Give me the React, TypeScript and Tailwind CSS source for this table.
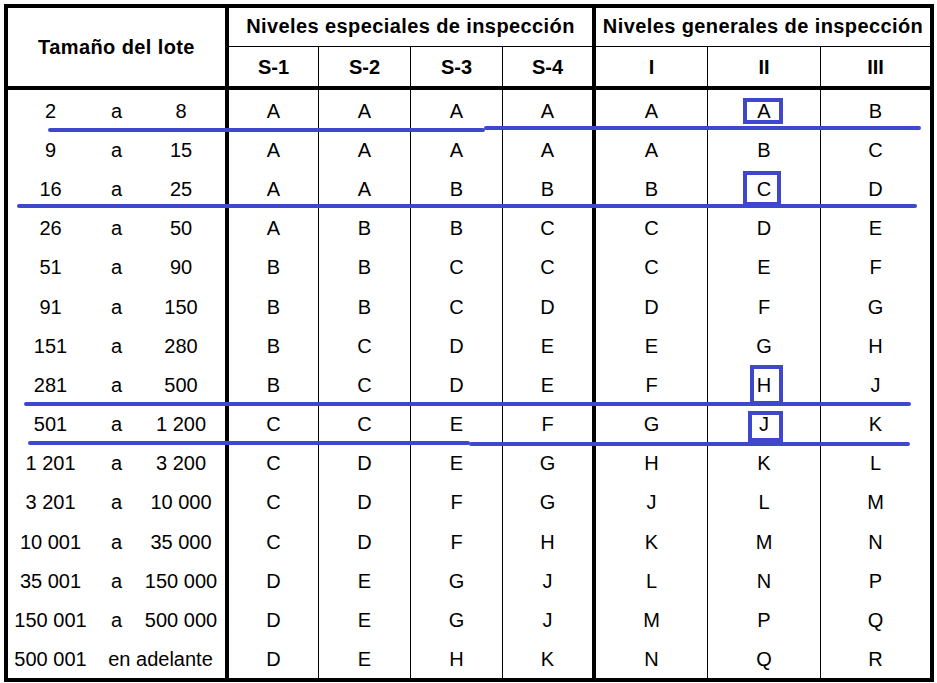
import React from "react";

const rows: string[][] = [
  ["2", "a", "8", "A", "A", "A", "A", "A", "A", "B"],
  ["9", "a", "15", "A", "A", "A", "A", "A", "B", "C"],
  ["16", "a", "25", "A", "A", "B", "B", "B", "C", "D"],
  ["26", "a", "50", "A", "B", "B", "C", "C", "D", "E"],
  ["51", "a", "90", "B", "B", "C", "C", "C", "E", "F"],
  ["91", "a", "150", "B", "B", "C", "D", "D", "F", "G"],
  ["151", "a", "280", "B", "C", "D", "E", "E", "G", "H"],
  ["281", "a", "500", "B", "C", "D", "E", "F", "H", "J"],
  ["501", "a", "1 200", "C", "C", "E", "F", "G", "J", "K"],
  ["1 201", "a", "3 200", "C", "D", "E", "G", "H", "K", "L"],
  ["3 201", "a", "10 000", "C", "D", "F", "G", "J", "L", "M"],
  ["10 001", "a", "35 000", "C", "D", "F", "H", "K", "M", "N"],
  ["35 001", "a", "150 000", "D", "E", "G", "J", "L", "N", "P"],
  ["150 001", "a", "500 000", "D", "E", "G", "J", "M", "P", "Q"],
  ["500 001", "en adelante", "", "D", "E", "H", "K", "N", "Q", "R"],
];

const cellW = [
  "w-[90px] border-r border-black",
  "w-[92px] border-r border-black",
  "w-[92px] border-r border-black",
  "w-[93px] border-r-4 border-black",
  "w-[112px] border-r border-black",
  "w-[113px] border-r border-black",
  "w-[109px]",
];

export default function App() {
  return (
    <div
      className="relative w-[937px] h-[683px] bg-white text-black overflow-hidden"
      style={{ fontFamily: '"Liberation Sans", Arial, sans-serif' }}
    >
      <div className="absolute left-0 top-0 pt-1 pl-1">
        <div className="w-[930px] border-4 border-black">
          {/* Header */}
          <div className="flex h-[82px] border-b-4 border-black font-bold text-[20px] tracking-[0.4px]">
            <div className="w-[221px] border-r-4 border-black flex items-center justify-center pb-[1px]">
              Tamaño del lote
            </div>
            <div className="w-[367px] border-r-4 border-black flex flex-col">
              <div className="h-[39px] border-b border-black flex items-center justify-center pb-[2px]">
                Niveles especiales de inspección
              </div>
              <div className="flex flex-1 tracking-normal">
                <div className="w-[90px] border-r border-black flex items-center justify-center">S-1</div>
                <div className="w-[92px] border-r border-black flex items-center justify-center">S-2</div>
                <div className="w-[92px] border-r border-black flex items-center justify-center">S-3</div>
                <div className="w-[89px] flex items-center justify-center">S-4</div>
              </div>
            </div>
            <div className="w-[334px] flex flex-col">
              <div className="h-[39px] border-b border-black flex items-center justify-center pb-[2px]">
                Niveles generales de inspección
              </div>
              <div className="flex flex-1 tracking-normal">
                <div className="w-[112px] border-r border-black flex items-center justify-center">I</div>
                <div className="w-[113px] border-r border-black flex items-center justify-center">II</div>
                <div className="w-[109px] flex items-center justify-center">III</div>
              </div>
            </div>
          </div>
          {/* Body */}
          <div className="flex flex-col text-[20px]">
            {rows.map((r, i) => (
              <div key={i} className="flex h-[39.2px]">
                <div className="w-[221px] border-r-4 border-black flex items-center pr-[3px] pt-[2px]">
                  <div className="w-[85px] text-center">{r[0]}</div>
                  {r[2] === "" ? (
                    <div className="flex-1 text-center pl-[6px]">{r[1]}</div>
                  ) : (
                    <>
                      <div className="w-[47px] text-center">{r[1]}</div>
                      <div className="flex-1 text-center">{r[2]}</div>
                    </>
                  )}
                </div>
                {r.slice(3).map((c, j) => (
                  <div key={j} className={`${cellW[j]} flex items-center justify-center pt-[2px]`}>
                    {c}
                  </div>
                ))}
              </div>
            ))}
          </div>
        </div>
      </div>

      {/* Annotations */}
      <div className="absolute left-[48px] top-[128px] w-[437px] h-[4px] bg-[#3F48CC] rounded-sm" />
      <div className="absolute left-[484px] top-[126px] w-[437px] h-[4px] bg-[#3F48CC] rounded-sm" />
      <div className="absolute left-[17px] top-[204px] w-[900px] h-[4px] bg-[#3F48CC] rounded-sm" />
      <div className="absolute left-[24px] top-[402px] w-[887px] h-[4px] bg-[#3F48CC] rounded-sm" />
      <div className="absolute left-[28px] top-[441px] w-[442px] h-[4px] bg-[#3F48CC] rounded-sm" />
      <div className="absolute left-[469px] top-[442px] w-[441px] h-[4px] bg-[#3F48CC] rounded-sm" />

      <div className="absolute left-[743px] top-[98px] w-[40px] h-[26px] border-4 border-[#3F48CC]" />
      <div className="absolute left-[743px] top-[171px] w-[38px] h-[35px] border-4 border-[#3F48CC]" />
      <div className="absolute left-[750px] top-[365px] w-[33px] h-[40px] border-4 border-[#3F48CC]" />
      <div className="absolute left-[748px] top-[411px] w-[35px] h-[31px] border-4 border-[#3F48CC]" />
    </div>
  );
}
